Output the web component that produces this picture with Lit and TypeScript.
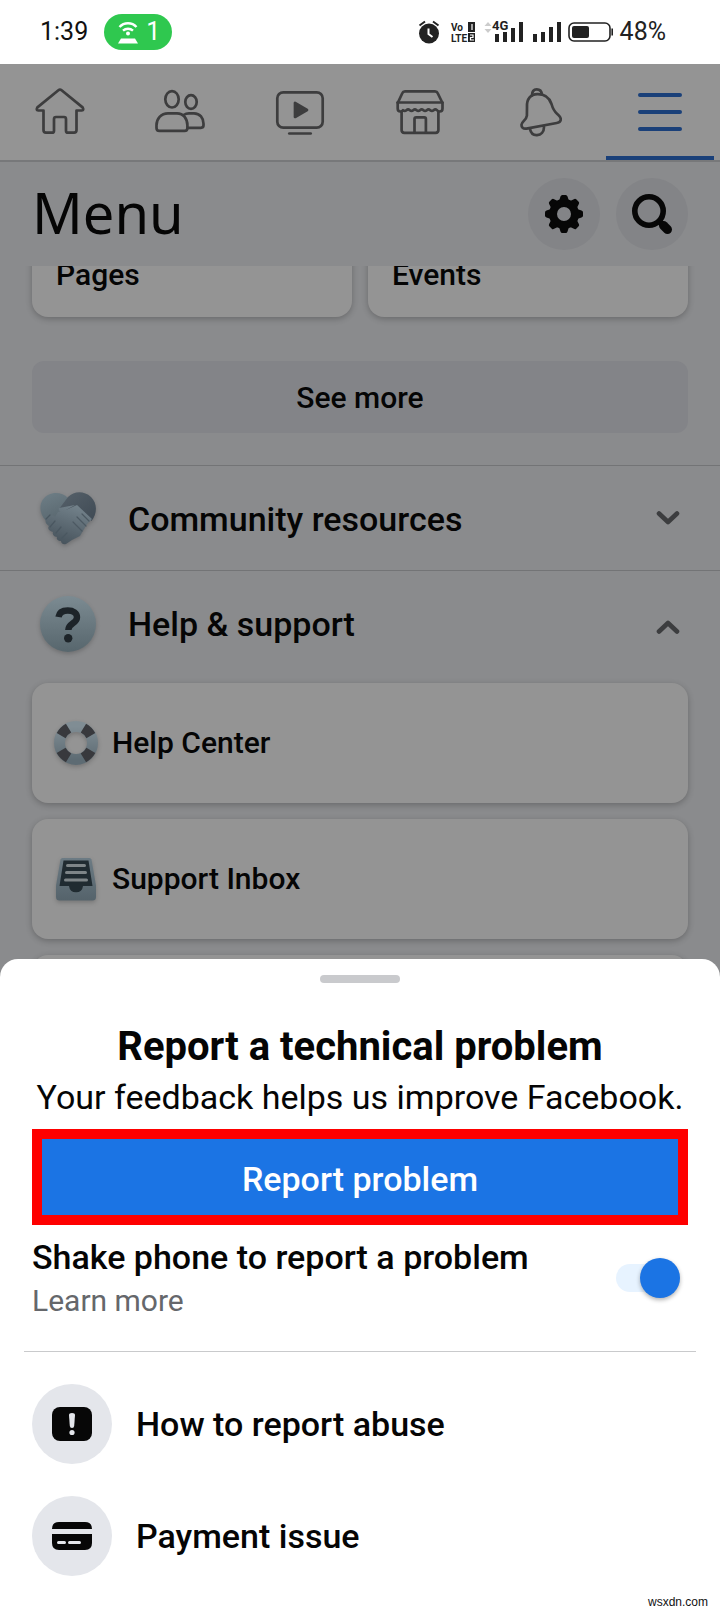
import { LitElement, html, css, svg } from "lit";
import { customElement, property, state } from "lit/decorators.js";

const navIcons: Record<string, unknown> = {
  home: svg`<path d="M24.4 4.2 3.4 21.4q-1.6 3 .8 3.1H9.5V44q0 2.7 2.5 2.7H18q2 0 2-2V33q0-2 2-2H30q2 0 2 2V44.7q0 2 2 2H40q2.5 0 2.5-2.7V24.5H47.8q2.4-.1 .8-3.1L27.6 4.2q-1.6-1.3-3.2 0Z" />`,
  friends: svg`
    <ellipse cx="18" cy="13.3" rx="6.7" ry="8.2" />
    <ellipse cx="37" cy="16" rx="5.7" ry="6.8" />
    <path d="M14 27.3h9c6.500 0 10.400 5.500 10.400 12v2.700c0 2-1 2.900-2.900 2.900H5.400c-1.900 0-2.900-1-2.900-2.900v-2.700c0-6.500 4.500-12 11.500-12Z" />
    <path d="M29.500 29c1.500-1 3.500-1.700 5.500-1.700h5c6 0 9.500 5 9.500 10.500v1.500c0 1.600-.9 2.500-2.600 2.500H34" />`,
  watch: svg`
    <rect x="3.300" y="6.300" width="45.400" height="35.400" rx="6" />
    <path d="M15.300 47.500h21.400" />
    <path d="M21 17v14l12-7Z" fill="currentColor" />`,
  market: svg`
    <path d="M11 5.300h30q2 0 2.600 1.700l4.900 10v5.500q0 3-2.700 3-1.800 0-2.800-1.300q-1.700-1.500-3.400 0t-3.400 0t-3.400 0t-3.400 0t-3.400 0t-3.400 0t-3.400 0t-3.400 0t-3.400 0t-3.400 0q-1 1.300-2.600 1.300-2.700 0-2.700-3V17L8.400 7Q9 5.300 11 5.300Z" />
    <path d="M3.500 16.500h45" />
    <path d="M7.600 26v18q0 2.800 2.800 2.800h31.200q2.800 0 2.800-2.800V26" />
    <path d="M20.500 46.500V33q0-1.700 1.700-1.700h8q1.700 0 1.700 1.700v13.500" />`,
  alerts: svg`
    <g transform="translate(-1.500 0)">
      <path d="M14.500 21C14 13 18 8.300 25 8.200c7-.1 12 3.800 14 9.800 1.300 4.500 2.300 7 5.500 9.700 3 2.500 4.200 4.300 3.700 6.300-.4 2-1.700 2.700-4 3L14 42.600c-3.500.5-5.200-1.400-5-4 .3-3 5-4.800 5.400-9Z" />
      <path d="M19.500 9.500c0-4 2-6.200 4.700-6.200 3 0 4.900 2 5.100 5.200" />
      <path d="M17.500 43c.8 4 3.500 6.300 7 6.100 4-.2 7-3 7-8" />
    </g>`,
  menu: svg`<path d="M6 9h40M6 26h40M6 43h40" stroke-width="4" />`,
};

const navTabs = [
  { id: "home", label: "Home" },
  { id: "friends", label: "Friends" },
  { id: "watch", label: "Watch" },
  { id: "market", label: "Marketplace" },
  { id: "alerts", label: "Notifications" },
  { id: "menu", label: "Menu" },
];

@customElement("status-bar")
class StatusBar extends LitElement {
  static styles = css`
    :host {
      display: flex;
      align-items: center;
      justify-content: space-between;
      box-sizing: border-box;
      height: 64px;
      padding: 0 54px 0 40px;
      background: #fff;
      color: #222;
      font: 400 25px/32px Roboto, sans-serif;
    }
    .side {
      display: flex;
      align-items: center;
    }
    .start {
      gap: 16px;
    }
    .clock {
      color: #111;
    }
    .hotspot {
      display: flex;
      align-items: center;
      gap: 8px;
      box-sizing: border-box;
      height: 36px;
      padding: 0 12px 0 14px;
      border-radius: 18px;
      background: #2fc84f;
      color: #fff;
    }
    .end {
      gap: 6px;
    }
    svg {
      display: block;
    }
    .tiny {
      font: 700 10px Roboto, sans-serif;
    }
    .net {
      font: 700 13px Roboto, sans-serif;
    }
  `;

  render() {
    return html`
      <div class="side start">
        <span class="clock">1:39</span>
        <span class="hotspot">
          <svg width="20" height="24" viewBox="0 0 20 24" fill="none" stroke="#fff" stroke-width="2.400" aria-hidden="true">
            <path d="M1.500 7a11.500 11.500 0 0 1 17 0M5 10.600a7.500 7.500 0 0 1 10 0" />
            <circle cx="10" cy="13.500" r="2" fill="#fff" stroke="none" />
            <path d="M3 18.500h14l3 5H0Z" fill="#fff" stroke="none" />
          </svg>
          <span>1</span>
        </span>
      </div>
      <div class="side end">
        <svg width="145" height="28" viewBox="0 0 145 28" fill="#222" aria-hidden="true">
          <circle cx="12" cy="15.500" r="10" />
          <path d="M2.500 7.500 8 3.500M21.500 7.500 16 3.500" stroke="#222" stroke-width="2" />
          <path d="M11.500 10.500v5.500l4 3" fill="none" stroke="#fff" stroke-width="2" />
          <text class="tiny" x="34" y="13">Vo</text>
          <text class="tiny" x="34" y="24">LTE</text>
          <path d="M51 4h7v10h-7ZM51 15h7v9h-7Z" />
          <path d="M55 6v6M53 17h3v2.500h-2.500V22H57" fill="none" stroke="#fff" stroke-width="1.200" />
          <path d="m67.500 8 3.500-4 3.500 4ZM67.500 11l3.500 4 3.500-4Z" fill="#ccc" />
          <text class="net" x="75" y="12">4G</text>
          <path d="M78 16h4v8h-4ZM86 14h4v10h-4ZM94 10h4v14h-4ZM102 4h4v20h-4Z" />
          <path d="M116 16h4v8h-4ZM124 14h4v10h-4ZM132 9h4v15h-4ZM140 4h4v20h-4Z" />
        </svg>
        <svg width="46" height="22" viewBox="0 0 46 22" aria-hidden="true">
          <rect x="1" y="2" width="41" height="18" rx="5" fill="none" stroke="#222" stroke-width="1.600" />
          <rect x="4" y="5" width="17" height="12" rx="2" fill="#222" />
          <path d="M44.200 7.500v7" stroke="#222" stroke-width="1.600" />
        </svg>
        <span>48%</span>
      </div>
    `;
  }
}

@customElement("tab-bar")
class TabBar extends LitElement {
  @property() active = "menu";

  static styles = css`
    :host {
      display: block;
      background: #949494;
      border-bottom: 2px solid #77787a;
    }
    .tabs {
      display: grid;
      grid-template-columns: repeat(6, 1fr);
    }
    .tab {
      display: flex;
      align-items: center;
      justify-content: center;
      height: 96px;
      margin: 0 6px;
      padding: 4px 0 0;
      border: 0;
      border-bottom: 4px solid transparent;
      box-sizing: border-box;
      background: none;
      color: #3d3d3e;
    }
    .active {
      color: #1a4079;
      border-bottom-color: #1a4079;
      border-radius: 3px 3px 0 0;
    }
  `;

  render() {
    return html`
      <nav class="tabs" aria-label="Main">
        ${navTabs.map(
          (tab) => html`
            <button
              class="tab ${tab.id === this.active ? "active" : ""}"
              aria-label=${tab.label}
              @click=${() => (this.active = tab.id)}
            >
              <svg
                width="52"
                height="52"
                viewBox="0 0 52 52"
                fill="none"
                stroke="currentColor"
                stroke-width="2.700"
                stroke-linecap="round"
                stroke-linejoin="round"
              >
                ${navIcons[tab.id]}
              </svg>
            </button>
          `
        )}
      </nav>
    `;
  }
}

const gearTeeth = [0, 45, 90, 135, 180, 225, 270, 315];
const buoyBands = [45, 135, 225, 315];

const handshakeHeart = svg`
  <defs>
    <linearGradient id="palm" x1="0" y1="0" x2="0.300" y2="1">
      <stop offset="0" stop-color="#6f7f87" /><stop offset="1" stop-color="#56646c" />
    </linearGradient>
    <linearGradient id="fist" x1="0.700" y1="0" x2="0.300" y2="1">
      <stop offset="0" stop-color="#74838c" /><stop offset="1" stop-color="#46525b" />
    </linearGradient>
    <linearGradient id="cuff" x1="0" y1="0" x2="1" y2="1">
      <stop offset="0" stop-color="#56616a" /><stop offset="1" stop-color="#3f4a54" />
    </linearGradient>
  </defs>
  <path d="M28 7C21-.5 8 .5 2.500 9-1.500 16 .5 24 6 30l22 8Z" fill="url(#palm)" />
  <path d="M28 6C34 0 44-.5 51 6c7 7 6 17 .5 24L40 20 28 24 19 18Z" fill="url(#cuff)" />
  <path d="M35 14 24 20c-4 2-6-1-5-3M37 14l15 14-5 5-7 12-8 4-6 4c-3 1-5-1-5-3-3 0-5-2-4-4-3 0-5-3-4-5-4-1-6-4-4-6-3-2-5-5-2-8 2-3 6-3 8-1l3-5 8-2Z" fill="url(#fist)" />
  <path d="m6 28 4-4M10 36l5-6M16 42l5-6M22 47l5-5" stroke="#4a5760" stroke-width="1.200" stroke-linecap="round" />
  <path d="m37 26 9 9M33 31l9 9M42 23l7 7" stroke="#4c5962" stroke-width="1.200" stroke-linecap="round" />`;

const questionBadge = svg`
  <defs>
    <linearGradient id="disc" x1="0" y1="0" x2="0" y2="1">
      <stop offset="0" stop-color="#7c8b92" /><stop offset="1" stop-color="#57666d" />
    </linearGradient>
  </defs>
  <circle cx="28" cy="28" r="28" fill="url(#disc)" />
  <path d="M18.500 21c.7-4.600 4.500-6.500 9.300-6.500 5.500 0 9.200 2.500 9.200 6.800 0 6.400-8.700 6-8.700 12.700" fill="none" stroke="#1d2429" stroke-width="6.400" />
  <circle cx="28.200" cy="42.300" r="4.200" fill="#1d2429" />`;

const lifeBuoy = svg`
  <defs>
    <linearGradient id="ring" x1="0" y1="0" x2="0" y2="1">
      <stop offset="0" stop-color="#808d94" /><stop offset="1" stop-color="#5d6b73" />
    </linearGradient>
  </defs>
  <circle cx="24" cy="24" r="16.500" fill="none" stroke="url(#ring)" stroke-width="11" />
  ${buoyBands.map(
    (a) => svg`<path d="M17.500 3.200Q24 1.400 30.500 3.200L28 13.300q-4-1.400-8 0Z" fill="#38393d" transform="rotate(${a} 24 24)" />`
  )}`;

const inboxTray = svg`
  <defs>
    <linearGradient id="tray" x1="0" y1="0" x2="0" y2="1">
      <stop offset="0" stop-color="#6c7b84" /><stop offset="1" stop-color="#55636b" />
    </linearGradient>
  </defs>
  <path d="M10.500 3h27q1.500 0 2 1.500l4.500 26V42q0 3.500-3.500 3.500h-33Q4 45.500 4 42V30.500l4.500-26Q9 3 10.500 3Z" fill="url(#tray)" />
  <path d="M11.500 5.500h25l4 25.500h-9.500q-.8 6.300-7 6.300t-7-6.300H7.500Z" fill="#202b31" />
  <path d="M15.500 10.500h17M14.500 17.500h19M13.500 25h21" stroke="#7e8588" stroke-width="3" stroke-linecap="round" />`;

@customElement("menu-page")
class MenuPage extends LitElement {
  @state() private helpOpen = true;

  static styles = css`
    :host {
      display: block;
      background: #8a8b8d;
      color: #050505;
      font: 500 30px/36px Roboto, sans-serif;
    }
    button {
      font: inherit;
      color: inherit;
      border: 0;
      margin: 0;
      padding: 0;
      text-align: left;
    }
    svg {
      display: block;
      flex: none;
    }
    .head {
      position: relative;
      z-index: 1;
      display: flex;
      align-items: center;
      gap: 16px;
      padding: 16px 32px;
      background: #8a8b8d;
    }
    .title {
      flex: 1;
      margin: 0;
      padding-bottom: 4px;
      font: 400 56px/68px "Noto Sans", sans-serif;
    }
    .round {
      width: 72px;
      height: 72px;
      border-radius: 50%;
      background: #838487;
    }
    .shortcuts {
      display: grid;
      grid-template-columns: 1fr 1fr;
      gap: 16px;
      margin: -69px 32px 0;
    }
    .card {
      display: flex;
      align-items: center;
      gap: 12px;
      box-sizing: border-box;
      height: 120px;
      padding: 0 20px;
      border-radius: 16px;
      background: #949494;
      box-shadow: 0 2px 6px rgba(0, 0, 0, 0.24);
    }
    .shortcut {
      align-items: flex-end;
      padding: 24px;
    }
    .more {
      display: block;
      width: calc(100% - 64px);
      height: 72px;
      margin: 44px 32px 32px;
      padding-top: 2px;
      border-radius: 12px;
      background: #838488;
      text-align: center;
    }
    .section {
      display: flex;
      align-items: center;
      gap: 32px;
      box-sizing: border-box;
      width: 100%;
      height: 105px;
      padding: 2px 40px 0;
      border-top: 1px solid #737476;
      background: none;
      font-size: 34px;
    }
    .name {
      flex: 1;
    }
    .picture {
      filter: drop-shadow(0 2px 2px rgba(0, 0, 0, 0.2));
    }
    .list {
      display: grid;
      gap: 16px;
      padding: 8px 32px;
    }
  `;

  private chevron(up: boolean) {
    return html`<svg width="24" height="24" viewBox="0 0 24 24" fill="none" stroke="#3c3d3f" stroke-width="4.600" stroke-linecap="round" stroke-linejoin="round" aria-hidden="true">
      <path d=${up ? "M3 19.500 12 11l9 8.500" : "M3 6.500 12 15l9-8.500"} />
    </svg>`;
  }

  render() {
    return html`
      <header class="head">
        <h1 class="title">Menu</h1>
        <button class="round" aria-label="Settings">
          <svg width="72" height="72" viewBox="0 0 72 72" fill="#070707">
            <circle cx="36" cy="36" r="11" fill="none" stroke="#070707" stroke-width="8" />
            ${gearTeeth.map(
              (a) => svg`<path d="M31 23 32.500 18.500Q33 17 34.300 17h3.400q1.300 0 1.800 1.500L41 23Z" transform="rotate(${a} 36 36)" />`
            )}
          </svg>
        </button>
        <button class="round" aria-label="Search">
          <svg width="72" height="72" viewBox="0 0 72 72" fill="none" stroke="#070707">
            <circle cx="33" cy="33" r="14.200" stroke-width="5.600" />
            <path d="m43 43 4 4" stroke-width="6" />
            <path d="m47.500 47.500 4 4" stroke-width="9" stroke-linecap="round" />
          </svg>
        </button>
      </header>
      <div class="shortcuts">
        <button class="card shortcut">Pages</button>
        <button class="card shortcut">Events</button>
      </div>
      <button class="more">See more</button>
      <button class="section" aria-expanded="false">
        <svg class="picture" width="56" height="56" viewBox="0 0 56 56" aria-hidden="true">${handshakeHeart}</svg>
        <span class="name">Community resources</span>
        ${this.chevron(false)}
      </button>
      <button class="section" aria-expanded=${this.helpOpen} @click=${() => (this.helpOpen = !this.helpOpen)}>
        <svg class="picture" width="56" height="56" viewBox="0 0 56 56" aria-hidden="true">${questionBadge}</svg>
        <span class="name">Help &amp; support</span>
        ${this.chevron(this.helpOpen)}
      </button>
      ${this.helpOpen
        ? html`<div class="list">
            <button class="card">
              <svg class="picture" width="48" height="48" viewBox="0 0 48 48" aria-hidden="true">${lifeBuoy}</svg>
              Help Center
            </button>
            <button class="card">
              <svg class="picture" width="48" height="48" viewBox="0 0 48 48" aria-hidden="true">${inboxTray}</svg>
              Support Inbox
            </button>
            <div class="card"></div>
          </div>`
        : ""}
    `;
  }
}

@customElement("report-sheet")
class ReportSheet extends LitElement {
  static styles = css`
    :host {
      display: flex;
      flex-direction: column;
      padding: 16px 32px 0;
      border-radius: 18px 18px 0 0;
      background: #fff;
      color: #050505;
      font: 500 34px/44px Roboto, sans-serif;
    }
    .handle {
      align-self: center;
      width: 80px;
      height: 8px;
      border-radius: 4px;
      background: #c9cacd;
    }
    .title {
      margin: 36px 0 0;
      font-size: 40px;
      line-height: 56px;
      font-weight: 700;
      text-align: center;
    }
    .lead {
      margin: 0 0 10px;
      font-weight: 400;
      text-align: center;
      white-space: nowrap;
    }
    .report {
      height: 96px;
      padding: 4px 0 0;
      border: 10px solid #fe0000;
      background: #1b74e4;
      color: #fff;
      font: inherit;
    }
    .shake {
      display: flex;
      align-items: center;
      justify-content: space-between;
      padding: 10px 8px 30px 0;
    }
    .words {
      display: flex;
      flex-direction: column;
      gap: 2px;
    }
    .learn {
      color: #65676b;
      font-size: 30px;
      line-height: 40px;
      font-weight: 400;
      text-decoration: none;
    }
    .switch {
      appearance: none;
      display: flex;
      align-items: center;
      justify-content: flex-end;
      width: 64px;
      height: 28px;
      margin: 0;
      border-radius: 14px;
      background: #e7f3ff;
    }
    .switch:not(:checked) {
      justify-content: flex-start;
    }
    .switch::before {
      content: "";
      width: 40px;
      height: 40px;
      border-radius: 50%;
      background: #1b74e4;
      box-shadow: 0 2px 4px rgba(0, 0, 0, 0.3);
    }
    .rule {
      height: 1px;
      margin: 0 -8px;
      border: 0;
      background: #c9cacc;
    }
    .options {
      display: grid;
      gap: 32px;
      padding: 32px 0 0;
    }
    .option {
      display: flex;
      align-items: center;
      gap: 24px;
      padding: 0;
      border: 0;
      background: none;
      color: inherit;
      font: inherit;
      text-align: left;
    }
    .badge {
      width: 80px;
      height: 80px;
      border-radius: 50%;
      background: #e4e6eb;
    }
    .credit {
      align-self: flex-end;
      margin-right: -20px;
      padding: 18px 0 2px;
      color: #111;
      font: 400 12px/16px "Liberation Sans", sans-serif;
    }
  `;

  render() {
    return html`
      <div class="handle"></div>
      <h2 class="title">Report a technical problem</h2>
      <p class="lead">Your feedback helps us improve Facebook.</p>
      <button class="report">Report problem</button>
      <div class="shake">
        <div class="words">
          <label for="shake">Shake phone to report a problem</label>
          <a class="learn" href="#">Learn more</a>
        </div>
        <input class="switch" id="shake" type="checkbox" role="switch" checked />
      </div>
      <hr class="rule" />
      <div class="options">
        <button class="option">
          <svg class="badge" viewBox="0 0 80 80" aria-hidden="true">
            <rect x="20" y="23" width="40" height="34" rx="8" fill="#070707" />
            <path d="M37 31q0-2 3-2t3 2l-.8 11q-.2 2-2.200 2t-2.200-2Z" fill="#e4e6eb" />
            <circle cx="40" cy="48.500" r="2.600" fill="#e4e6eb" />
          </svg>
          How to report abuse
        </button>
        <button class="option">
          <svg class="badge" viewBox="0 0 80 80" aria-hidden="true">
            <path d="M20 33q0-7 7-7h26q7 0 7 7ZM20 38h40v9q0 7-7 7H27q-7 0-7-7Z" fill="#070707" />
            <path d="M26.500 46.500h6M37.500 46.500h10" stroke="#e4e6eb" stroke-width="3" stroke-linecap="round" />
          </svg>
          Payment issue
        </button>
      </div>
      <span class="credit">wsxdn.com</span>
    `;
  }
}

@customElement("app-root")
class AppRoot extends LitElement {
  static styles = css`
    :host {
      display: flex;
      flex-direction: column;
      height: 100vh;
      background: #8a8b8d;
    }
    status-bar,
    tab-bar,
    report-sheet {
      flex: none;
    }
    .behind {
      flex: 1;
      min-height: 0;
      overflow: hidden;
    }
    .sheet {
      position: relative;
      z-index: 1;
      margin-top: -20px;
    }
  `;

  render() {
    return html`
      <status-bar></status-bar>
      <tab-bar></tab-bar>
      <menu-page class="behind"></menu-page>
      <report-sheet class="sheet"></report-sheet>
    `;
  }
}
